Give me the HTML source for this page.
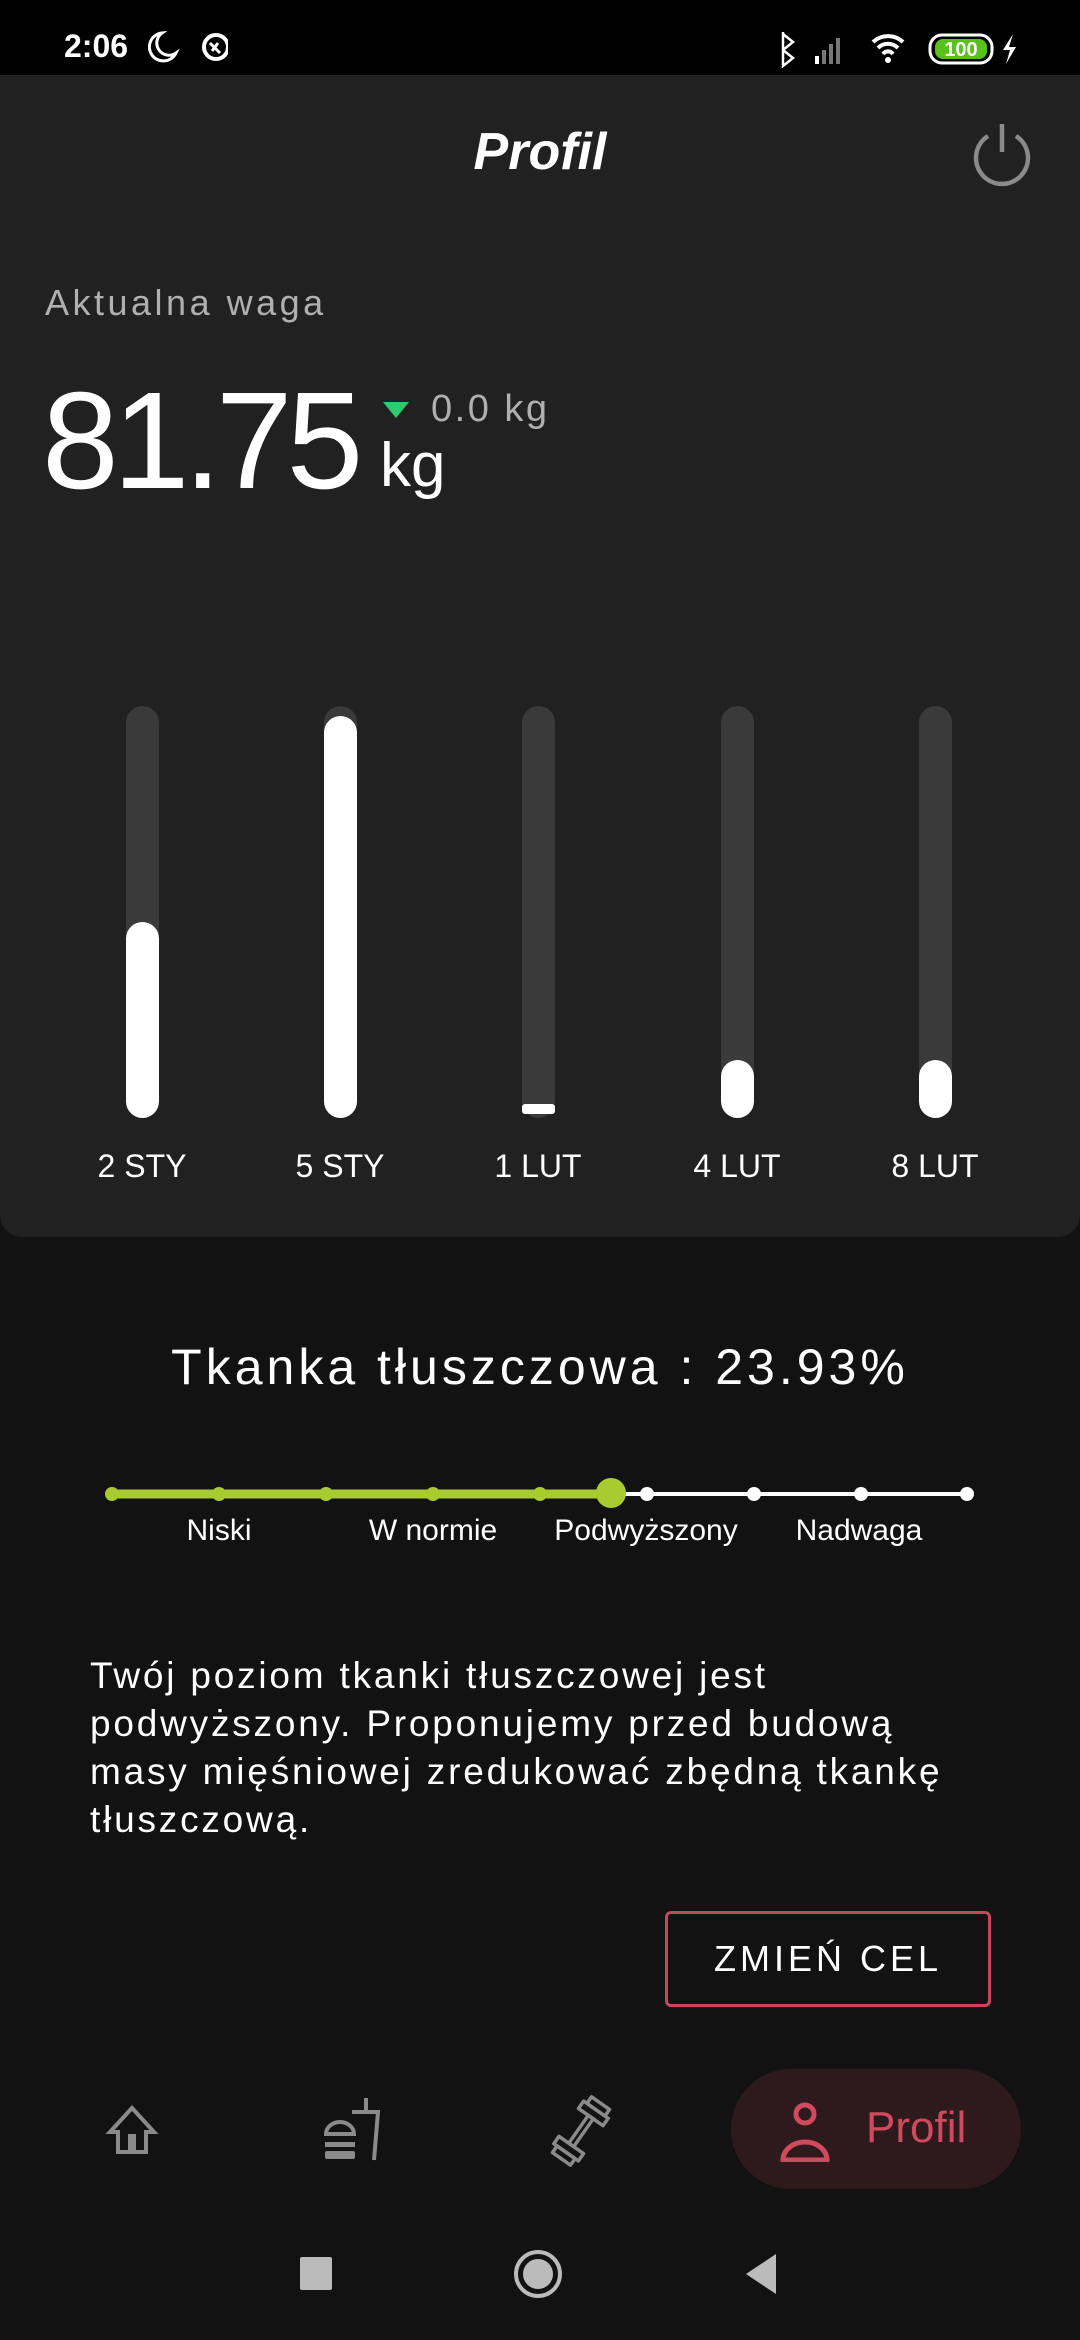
<!DOCTYPE html>
<html><head><meta charset="utf-8"><style>
*{margin:0;padding:0;box-sizing:border-box}
body{width:1080px;height:2340px;background:#121212;font-family:"Liberation Sans",sans-serif;color:#fff;position:relative;overflow:hidden}
.abs{position:absolute}
.status{left:0;top:0;width:1080px;height:75px;background:#000}
.card{left:0;top:75px;width:1080px;height:1162px;background:#212121;border-radius:0 0 22px 22px}
.track{width:33px;top:706px;height:412px;background:#3a3a3a;border-radius:17px}
.fill{width:33px;background:#fff;border-radius:17px;bottom:0;left:0;position:absolute}
.bl{top:1148px;font-size:32px;width:200px;text-align:center;color:#fff}
.sl{top:1514px;font-size:30px;color:#fff;width:240px;text-align:center}
</style></head><body>
<div class="abs status"></div>
<div class="abs" style="left:64px;top:28px;font-size:32px;font-weight:bold">2:06</div>
<svg class="abs" style="left:148px;top:30px" width="80" height="36" viewBox="0 0 80 36"><path d="M14 3a14 14 0 1 0 14 20A12 12 0 0 1 14 3z" fill="none" stroke="#fff" stroke-width="3"/><circle cx="68" cy="17" r="12" fill="none" stroke="#fff" stroke-width="4"/><path d="M62 13l10 10M64 21l6-8" stroke="#fff" stroke-width="3"/></svg>
<svg class="abs" style="left:775px;top:28px" width="256" height="40" viewBox="0 0 256 40"><path d="M8 6l10 8-10 8 0-18v34l10-8-10-8" fill="none" stroke="#fff" stroke-width="2.5"/><rect x="40" y="28" width="4" height="8" fill="#fff"/><rect x="47" y="22" width="4" height="14" fill="#777"/><rect x="54" y="16" width="4" height="20" fill="#777"/><rect x="61" y="10" width="4" height="26" fill="#777"/><path d="M98 14a22 22 0 0 1 30 0M103 20a14 14 0 0 1 20 0M108 26a6 6 0 0 1 10 0" fill="none" stroke="#fff" stroke-width="4"/><circle cx="113" cy="32" r="3" fill="#fff"/><rect x="155" y="7" width="62" height="28" rx="12" fill="none" stroke="#fff" stroke-width="3"/><rect x="160" y="11" width="52" height="20" rx="8" fill="#56c21a"/><text x="186" y="28" font-size="20" font-weight="bold" fill="#fff" text-anchor="middle" font-family="Liberation Sans">100</text><path d="M238 6l-10 16h7l-4 14 10-17h-7z" fill="#fff"/></svg>
<div class="abs card"></div>
<div class="abs" style="left:0;width:1080px;top:122px;text-align:center;font-size:52px;font-weight:bold;font-style:italic">Profil</div>
<svg class="abs" style="left:970px;top:122px" width="64" height="66" viewBox="0 0 64 66"><path d="M18 14a26 26 0 1 0 28 0" fill="none" stroke="#8a8a8a" stroke-width="4.5"/><path d="M32 2v28" stroke="#8a8a8a" stroke-width="4.5"/></svg>
<div class="abs" style="left:45px;top:282px;font-size:36px;color:#b0b0b0;letter-spacing:3.5px">Aktualna waga</div>
<div class="abs" style="left:42px;top:372px;font-size:138px;font-weight:300;letter-spacing:-6px;line-height:1">81.75</div>
<div class="abs" style="left:380px;top:430px;font-size:62px">kg</div>
<svg class="abs" style="left:383px;top:402px" width="26" height="18"><path d="M0 0h26L13 16z" fill="#2ecc71"/></svg>
<div class="abs" style="left:431px;top:388px;font-size:38px;color:#b0b0b0;letter-spacing:2.5px">0.0 kg</div>
<div class="abs track" style="left:126px"><div class="fill" style="height:196px"></div></div>
<div class="abs track" style="left:324px"><div class="fill" style="height:402px"></div></div>
<div class="abs track" style="left:522px"><div class="fill" style="height:10px;bottom:4px;left:0;border-radius:3px;width:33px"></div></div>
<div class="abs track" style="left:721px"><div class="fill" style="height:58px"></div></div>
<div class="abs track" style="left:919px"><div class="fill" style="height:58px"></div></div>
<div class="abs bl" style="left:42px">2 STY</div>
<div class="abs bl" style="left:240px">5 STY</div>
<div class="abs bl" style="left:438px">1 LUT</div>
<div class="abs bl" style="left:637px">4 LUT</div>
<div class="abs bl" style="left:835px">8 LUT</div>
<div class="abs" style="left:0;width:1080px;top:1338px;text-align:center;font-size:50px;letter-spacing:4px">Tkanka tłuszczowa : 23.93%</div>
<svg class="abs" style="left:100px;top:1474px" width="880" height="40" viewBox="0 0 880 40"><line x1="510" y1="20" x2="867" y2="20" stroke="#fff" stroke-width="4"/><line x1="12" y1="20" x2="510" y2="20" stroke="#a8cc2f" stroke-width="9"/><g fill="#a8cc2f"><circle cx="12" cy="20" r="7"/><circle cx="119" cy="20" r="7"/><circle cx="226" cy="20" r="7"/><circle cx="333" cy="20" r="7"/><circle cx="440" cy="20" r="7"/><circle cx="511" cy="19" r="15"/></g><g fill="#fff"><circle cx="547" cy="20" r="7"/><circle cx="654" cy="20" r="7"/><circle cx="761" cy="20" r="7"/><circle cx="867" cy="20" r="7"/></g></svg>
<div class="abs sl" style="left:99px">Niski</div>
<div class="abs sl" style="left:313px">W normie</div>
<div class="abs sl" style="left:526px">Podwyższony</div>
<div class="abs sl" style="left:739px">Nadwaga</div>
<div class="abs" style="left:90px;top:1652px;font-size:37px;line-height:48px;width:980px;letter-spacing:2.8px">Twój poziom tkanki tłuszczowej jest<br>podwyższony. Proponujemy przed budową<br>masy mięśniowej zredukować zbędną tkankę<br>tłuszczową.</div>
<div class="abs" style="left:665px;top:1911px;width:326px;height:96px;border:3px solid #c8465a;border-radius:6px;font-size:36px;letter-spacing:4px;text-align:center;line-height:90px">ZMIEŃ CEL</div>
<svg class="abs" style="left:104px;top:2104px" width="56" height="52" viewBox="0 0 56 52"><path d="M28 4L6 28h8v20h12V32h4v16h12V28h8z" fill="none" stroke="#8a8a8a" stroke-width="4" stroke-linejoin="miter"/></svg>
<svg class="abs" style="left:322px;top:2098px" width="66" height="66" viewBox="0 0 66 66"><path d="M30 14h26l-4 48" fill="none" stroke="#8a8a8a" stroke-width="4"/><path d="M44 0v14" stroke="#8a8a8a" stroke-width="4"/><path d="M4 36a14 12 0 0 1 28 0z" fill="none" stroke="#8a8a8a" stroke-width="4"/><rect x="3" y="44" width="30" height="5" fill="#8a8a8a"/><rect x="3" y="53" width="30" height="8" rx="2" fill="#8a8a8a"/></svg>
<svg class="abs" style="left:544px;top:2094px" width="74" height="74" viewBox="0 0 74 74"><g transform="rotate(-55 37 37)" fill="none" stroke="#8a8a8a" stroke-width="3.5" stroke-linejoin="round"><rect x="3" y="26" width="8" height="22"/><rect x="11" y="22" width="9" height="30"/><rect x="54" y="22" width="9" height="30"/><rect x="63" y="26" width="8" height="22"/><rect x="20" y="34" width="34" height="6"/></g></svg>
<div class="abs" style="left:731px;top:2069px;width:290px;height:120px;border-radius:60px;background:#2e1a1d"></div>
<svg class="abs" style="left:780px;top:2100px" width="50" height="62" viewBox="0 0 50 62"><circle cx="25" cy="14" r="9" fill="none" stroke="#d04a5e" stroke-width="5"/><path d="M3 60a22 18 0 0 1 44 0z" fill="none" stroke="#d04a5e" stroke-width="5"/></svg>
<div class="abs" style="left:866px;top:2103px;font-size:44px;color:#d04a5e">Profil</div>
<div class="abs" style="left:300px;top:2257px;width:32px;height:33px;background:#bbb;border-radius:2px"></div>
<div class="abs" style="left:514px;top:2250px;width:48px;height:48px;border:4px solid #bbb;border-radius:50%"><div style="margin:5px;width:30px;height:30px;background:#bbb;border-radius:50%"></div></div>
<svg class="abs" style="left:744px;top:2254px" width="34" height="40"><path d="M32 0v40L2 20z" fill="#bbb"/></svg>
</body></html>
